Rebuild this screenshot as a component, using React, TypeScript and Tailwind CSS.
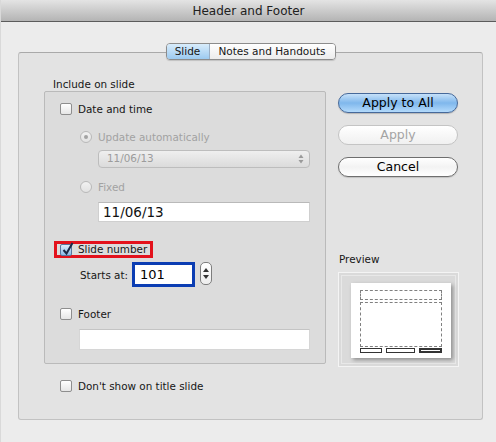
import React from "react";

const Checkbox: React.FC<{ checked?: boolean }> = ({ checked }) => (
  <span
    className={`relative block h-[12px] w-[12px] shrink-0 rounded-[2px] border ${
      checked
        ? "border-[#57769e] bg-linear-to-b from-[#dcecfb] to-[#8dbbe8]"
        : "border-[#8e8e8e] bg-linear-to-b from-white to-[#e6e6e6]"
    }`}
  >
    {checked && (
      <svg className="absolute -top-[3px] left-[1px]" width="12" height="14" viewBox="0 0 12 14">
        <path d="M1.5 8 L4.5 11.5 L10.5 1" fill="none" stroke="#1b2a48" strokeWidth="2" />
      </svg>
    )}
  </span>
);

const Radio: React.FC<{ selected?: boolean }> = ({ selected }) => (
  <span className="flex h-[12px] w-[12px] shrink-0 items-center justify-center rounded-full border border-[#b9b9b9] bg-linear-to-b from-[#f2f2f2] to-[#e2e2e2]">
    {selected && <span className="block h-[4px] w-[4px] rounded-full bg-[#a3a3a3]" />}
  </span>
);

const Row: React.FC<{ children: React.ReactNode; className?: string }> = ({ children, className }) => (
  <div className={`flex h-[14px] items-center gap-[6px] leading-[14px] ${className ?? ""}`}>{children}</div>
);

const App: React.FC = () => {
  return (
    <div className="flex h-[442px] w-[496px] flex-col overflow-hidden border-l border-[#d9d9d9] bg-[#ececec] font-['DejaVu_Sans',sans-serif] text-[10.4px] text-[#161616]">
      {/* title bar */}
      <div className="flex h-[22px] shrink-0 items-center justify-center border-b border-[#5c5c5c] bg-linear-to-b from-[#e4e4e4] to-[#b4b4b4] text-[12px] text-[#202020]">
        Header and Footer
      </div>

      {/* tab box */}
      <div className="relative ml-[17px] mt-[30px] h-[368px] w-[465px] rounded-[3px] border border-[#c2c2c2] border-t-[#a9a9a9] bg-[#e3e3e3]">
        <div className="absolute -top-[10px] left-1/2 flex h-[17px] -translate-x-1/2 overflow-hidden rounded-[4px] border border-[#8c8c8c] text-[10.5px] leading-[15px] shadow-[0_1px_1px_rgba(0,0,0,0.15)]">
          <div className="flex w-[43px] items-center justify-center border-r border-[#9aaec4] bg-linear-to-b from-[#d8ecfb] to-[#9ccaf0]">
            Slide
          </div>
          <div className="flex w-[125px] items-center justify-center bg-linear-to-b from-white to-[#ececec]">
            Notes and Handouts
          </div>
        </div>

        <div className="flex pl-[25px] pt-[24px]">
          {/* left column */}
          <div className="flex w-[282px] flex-col">
            <div className="ml-[9px] h-[14px] leading-[14px]">Include on slide</div>
            <div className="flex h-[273px] flex-col rounded-[2px] border border-[#bababa] bg-[#dcdcdc]">
              <Row className="ml-[15px] mt-[10px]">
                <Checkbox />
                <span>Date and time</span>
              </Row>
              <Row className="ml-[35px] mt-[14px] text-[#a2a2a2]">
                <Radio selected />
                <span>Update automatically</span>
              </Row>
              <div className="ml-[53px] mt-[6px] flex h-[18px] w-[212px] items-center justify-between rounded-[4px] border border-[#bdbdbd] bg-linear-to-b from-[#efefef] to-[#dbdbdb] pl-[8px] pr-[5px] text-[#9c9c9c]">
                <span>11/06/13</span>
                <svg width="6" height="10" viewBox="0 0 6 10">
                  <path d="M3 0.5 L5.5 4 L0.5 4 Z" fill="#9a9a9a" />
                  <path d="M3 9.5 L5.5 6 L0.5 6 Z" fill="#9a9a9a" />
                </svg>
              </div>
              <Row className="ml-[35px] mt-[12px] text-[#a2a2a2]">
                <Radio />
                <span>Fixed</span>
              </Row>
              <div className="ml-[53px] mt-[8px] flex h-[20px] w-[212px] items-center border border-[#cfcfcf] border-t-[#b9b9b9] bg-white pl-[4px] text-[13.5px] text-[#111]">
                11/06/13
              </div>

              <div className="ml-[9px] mt-[19px] flex h-[17px] w-[99px] items-center gap-[6px] whitespace-nowrap border-[3px] border-[#e3121c] pl-[3px]">
                <Checkbox checked />
                <span>Slide number</span>
              </div>
              <div className="ml-[35px] mt-[4px] flex items-start">
                <span className="mt-[6px] leading-[14px]">Starts at:</span>
                <div className="ml-[4px] flex h-[25px] w-[63px] items-center border-[3px] border-[#0b3db3] bg-white pl-[5px] text-[13px] text-black">
                  101
                </div>
                <div className="ml-[5px] flex h-[23px] w-[12px] flex-col items-center justify-center gap-[3px] rounded-[5px] border border-[#7e7e7e] bg-linear-to-b from-white to-[#ededed]">
                  <svg width="6" height="4" viewBox="0 0 6 4">
                    <path d="M3 0 L6 4 L0 4 Z" fill="#333" />
                  </svg>
                  <svg width="6" height="4" viewBox="0 0 6 4">
                    <path d="M3 4 L6 0 L0 0 Z" fill="#333" />
                  </svg>
                </div>
              </div>

              <Row className="ml-[15px] mt-[20px]">
                <Checkbox />
                <span>Footer</span>
              </Row>
              <div className="ml-[34px] mt-[8px] h-[21px] w-[231px] border border-[#d6d6d6] border-t-[#c4c4c4] bg-white" />
            </div>
            <Row className="ml-[16px] mt-[15px]">
              <Checkbox />
              <span>Don't show on title slide</span>
            </Row>
          </div>

          {/* right column */}
          <div className="ml-[12px] flex w-[121px] flex-col pt-[16px] text-[12.5px]">
            <button className="flex h-[20px] w-[120px] items-center justify-center rounded-full border border-[#46699a] bg-linear-to-b from-[#c6e1f9] via-[#7fb7ec] to-[#b3dafb] text-black shadow-[0_1px_1px_rgba(0,0,0,0.2)]">
              Apply to All
            </button>
            <button className="mt-[12px] flex h-[20px] w-[120px] items-center justify-center rounded-full border border-[#c4c4c4] bg-linear-to-b from-white to-[#f0f0f0] text-[#a4a4a4]">
              Apply
            </button>
            <button className="mt-[12px] flex h-[20px] w-[120px] items-center justify-center rounded-full border border-[#6e6e6e] bg-linear-to-b from-white via-[#f3f3f3] to-white text-black shadow-[0_1px_1px_rgba(0,0,0,0.15)]">
              Cancel
            </button>

            <div className="ml-[1px] mt-[75px] h-[14px] text-[10.4px] leading-[14px]">Preview</div>
            <div className="mt-[6px] h-[95px] w-[121px] border border-[#f4f4f4] bg-[#dadada] p-[2px]">
              <div className="h-full w-full border border-[#e8e8e8] pl-[9px] pt-[7px]">
                <div className="flex h-[75px] w-[100px] flex-col bg-white px-[9px] pt-[7px] shadow-[2px_2px_4px_rgba(0,0,0,0.35)]">
                  <div className="h-[10px] border border-dashed border-[#808080]" />
                  <div className="mt-[2px] h-[45px] border border-dashed border-[#808080]" />
                  <div className="mt-[1px] flex h-[5px] justify-between">
                    <div className="w-[22px] border border-[#333]" />
                    <div className="w-[29px] border border-[#333]" />
                    <div className="w-[23px] border-2 border-[#333]" />
                  </div>
                </div>
              </div>
            </div>
          </div>
        </div>
      </div>
    </div>
  );
};

export default App;
